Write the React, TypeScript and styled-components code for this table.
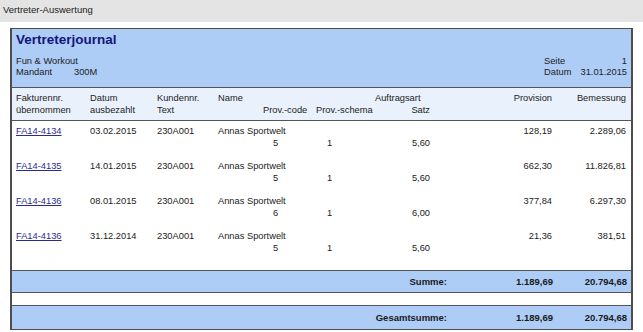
import styled, { createGlobalStyle } from "styled-components";

const GlobalStyle = createGlobalStyle`
  html, body {
    margin: 0;
    padding: 0;
    background: #ffffff;
  }
  body {
    font-family: "Liberation Sans", Arial, sans-serif;
    font-size: 9.3px;
    color: #222222;
  }
`;

const TitleBar = styled.div`
  height: 22px;
  line-height: 20px;
  padding-left: 3px;
  background-color: #e4e4e4;
  color: #1a1a1a;
  font-size: 9.5px;
`;

const Report = styled.div`
  margin: 6px 10px 0 10px;
  border: 1px solid #4d4d4d;
  border-left-width: 2px;
  border-right-width: 2px;
  background-color: #ffffff;
`;

const Header = styled.div`
  background-color: #adcdf7;
  padding: 2px 4px 9px 4px;
  border-bottom: 1px solid #555555;
`;

const Title = styled.h1`
  margin: 0;
  font-size: 13.5px;
  line-height: 17px;
  font-weight: bold;
  color: #14147a;
`;

const InfoGrid = styled.div`
  margin-top: 8px;
  display: grid;
  grid-template-columns: 1fr 83px;
  line-height: 11px;
`;

const InfoLine = styled.div`
  display: flex;
`;

const InfoLabel = styled.span`
  width: 58px;
`;

const MetaLine = styled.div`
  display: flex;
  justify-content: space-between;
`;

const Grid = styled.div`
  display: grid;
  grid-template-columns: 74px 67px 61px 45px 53px 59px 55px 122px 74px;
  line-height: 12px;
`;

const ColumnHead = styled(Grid)`
  background-color: #e9f1fc;
  padding: 4px 4px 4px 4px;
  border-bottom: 1px solid #555555;
`;

const Row = styled(Grid)`
  padding: 4px 4px 7px 4px;
`;

const Cell = styled.div<{ $col: number; $line: number; $span?: number; $align?: "left" | "right"; $indent?: number }>`
  grid-column: ${(p) => p.$col} / span ${(p) => p.$span ?? 1};
  grid-row: ${(p) => p.$line};
  text-align: ${(p) => p.$align ?? "left"};
  padding-left: ${(p) => p.$indent ?? 0}px;
  white-space: nowrap;
`;

const Link = styled.a`
  color: #2b2b8f;
  text-decoration: underline;
`;

const Rows = styled.div`
  padding-bottom: 9px;
`;

const TotalBar = styled.div<{ $height: number }>`
  display: grid;
  grid-template-columns: 1fr 106px 74px;
  align-items: center;
  height: ${(p) => p.$height}px;
  padding: 0 4px;
  background-color: #adcdf7;
  border-top: 1px solid #555555;
  font-weight: bold;
  font-size: 9.5px;
  color: #1a1a1a;
`;

const TotalCell = styled.div`
  text-align: right;
  white-space: nowrap;
`;

const Gap = styled.div`
  height: 12px;
  border-top: 1px solid #555555;
  background-color: #ffffff;
`;

type Entry = {
  nr: string;
  datum: string;
  kunde: string;
  name: string;
  code: string;
  schema: string;
  satz: string;
  provision: string;
  bemessung: string;
};

const entries: Entry[] = [
  { nr: "FA14-4134", datum: "03.02.2015", kunde: "230A001", name: "Annas Sportwelt", code: "5", schema: "1", satz: "5,60", provision: "128,19", bemessung: "2.289,06" },
  { nr: "FA14-4135", datum: "14.01.2015", kunde: "230A001", name: "Annas Sportwelt", code: "5", schema: "1", satz: "5,60", provision: "662,30", bemessung: "11.826,81" },
  { nr: "FA14-4136", datum: "08.01.2015", kunde: "230A001", name: "Annas Sportwelt", code: "6", schema: "1", satz: "6,00", provision: "377,84", bemessung: "6.297,30" },
  { nr: "FA14-4136", datum: "31.12.2014", kunde: "230A001", name: "Annas Sportwelt", code: "5", schema: "1", satz: "5,60", provision: "21,36", bemessung: "381,51" },
];

export default function App() {
  return (
    <>
      <GlobalStyle />
      <TitleBar>Vertreter-Auswertung</TitleBar>
      <Report>
        <Header>
          <Title>Vertreterjournal</Title>
          <InfoGrid>
            <InfoLine>Fun &amp; Workout</InfoLine>
            <MetaLine>
              <span>Seite</span>
              <span>1</span>
            </MetaLine>
            <InfoLine>
              <InfoLabel>Mandant</InfoLabel>
              <span>300M</span>
            </InfoLine>
            <MetaLine>
              <span>Datum</span>
              <span>31.01.2015</span>
            </MetaLine>
          </InfoGrid>
        </Header>

        <ColumnHead>
          <Cell $col={1} $line={1}>Fakturennr.</Cell>
          <Cell $col={2} $line={1}>Datum</Cell>
          <Cell $col={3} $line={1}>Kundennr.</Cell>
          <Cell $col={4} $line={1} $span={2}>Name</Cell>
          <Cell $col={7} $line={1}>Auftragsart</Cell>
          <Cell $col={8} $line={1} $align="right">Provision</Cell>
          <Cell $col={9} $line={1} $align="right">Bemessung</Cell>
          <Cell $col={1} $line={2}>übernommen</Cell>
          <Cell $col={2} $line={2}>ausbezahlt</Cell>
          <Cell $col={3} $line={2}>Text</Cell>
          <Cell $col={5} $line={2}>Prov.-code</Cell>
          <Cell $col={6} $line={2}>Prov.-schema</Cell>
          <Cell $col={7} $line={2} $align="right">Satz</Cell>
        </ColumnHead>

        <Rows>
          {entries.map((e, i) => (
            <Row key={i}>
              <Cell $col={1} $line={1}>
                <Link href="#">{e.nr}</Link>
              </Cell>
              <Cell $col={2} $line={1}>{e.datum}</Cell>
              <Cell $col={3} $line={1}>{e.kunde}</Cell>
              <Cell $col={4} $line={1} $span={3}>{e.name}</Cell>
              <Cell $col={8} $line={1} $align="right">{e.provision}</Cell>
              <Cell $col={9} $line={1} $align="right">{e.bemessung}</Cell>
              <Cell $col={5} $line={2} $indent={10}>{e.code}</Cell>
              <Cell $col={6} $line={2} $indent={11}>{e.schema}</Cell>
              <Cell $col={7} $line={2} $align="right">{e.satz}</Cell>
            </Row>
          ))}
        </Rows>

        <TotalBar $height={21}>
          <TotalCell>Summe:</TotalCell>
          <TotalCell>1.189,69</TotalCell>
          <TotalCell>20.794,68</TotalCell>
        </TotalBar>
        <Gap />
        <TotalBar $height={23}>
          <TotalCell>Gesamtsumme:</TotalCell>
          <TotalCell>1.189,69</TotalCell>
          <TotalCell>20.794,68</TotalCell>
        </TotalBar>
      </Report>
    </>
  );
}
